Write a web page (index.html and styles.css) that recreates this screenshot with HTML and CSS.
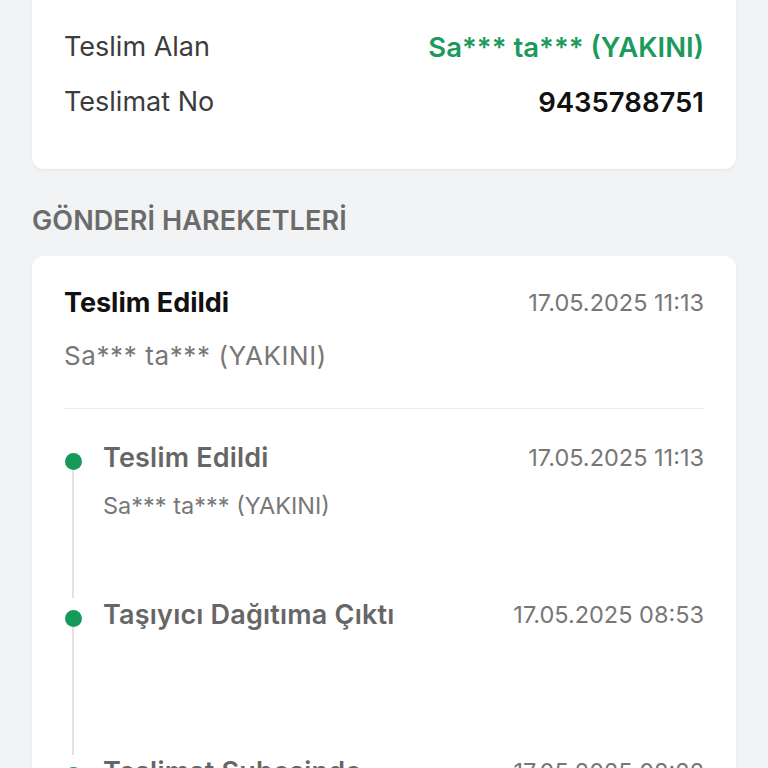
FILE: index.html
```html
<!DOCTYPE html>
<html lang="tr">

<head>
    <meta charset="UTF-8">
    <meta name="viewport" content="width=device-width, initial-scale=1.0">
    <title>Gönderi Takip</title>
    <link rel="stylesheet" href="styles.css">
</head>

<body>
    <div class="page">
        <div class="card summary">
            <div class="row">
                <span class="label">Teslim Alan</span>
                <span class="value green">Sa*** ta*** (YAKINI)</span>
            </div>
            <div class="row">
                <span class="label">Teslimat No</span>
                <span class="value">9435788751</span>
            </div>
        </div>

        <h2 class="section-title">GÖNDERİ HAREKETLERİ</h2>

        <div class="card history">
            <div class="last">
                <div class="row">
                    <span class="last-title">Teslim Edildi</span>
                    <span class="date">17.05.2025 11:13</span>
                </div>
                <p class="last-sub">Sa*** ta*** (YAKINI)</p>
            </div>

            <ul class="timeline">
                <li class="event">
                    <div class="rail"><span class="dot"></span><span class="line"></span></div>
                    <div class="event-body">
                        <div class="row">
                            <span class="event-title">Teslim Edildi</span>
                            <span class="date">17.05.2025 11:13</span>
                        </div>
                        <p class="event-sub">Sa*** ta*** (YAKINI)</p>
                    </div>
                </li>
                <li class="event">
                    <div class="rail"><span class="dot"></span><span class="line"></span></div>
                    <div class="event-body">
                        <div class="row">
                            <span class="event-title">Taşıyıcı Dağıtıma Çıktı</span>
                            <span class="date">17.05.2025 08:53</span>
                        </div>
                        <p class="event-sub"></p>
                    </div>
                </li>
                <li class="event">
                    <div class="rail"><span class="dot"></span><span class="line"></span></div>
                    <div class="event-body">
                        <div class="row">
                            <span class="event-title">Teslimat Şubesinde</span>
                            <span class="date">17.05.2025 08:22</span>
                        </div>
                        <p class="event-sub"></p>
                    </div>
                </li>
            </ul>
        </div>
    </div>
</body>

</html>
```

FILE: styles.css
```css
* {
    margin: 0;
    padding: 0;
    box-sizing: border-box;
    list-style-type: none;
}

body {
    background-color: #f2f3f5;
    font-family: Inter, "Noto Sans", sans-serif;
    overflow: hidden;
}

.page {
    padding: 0 32px;
}

.card {
    background-color: #fff;
    border-radius: 12px;
    box-shadow: 0 1px 3px rgba(0, 0, 0, .06);
}

.summary {
    margin-top: -20px;
    padding: 49px 32px 49px;
    display: flex;
    flex-direction: column;
    gap: 19px;
}

.row {
    display: flex;
    justify-content: space-between;
    align-items: center;
}

.label {
    font-size: 27px;
    line-height: 36px;
    color: #3c3c3c;
}

.value {
    font-size: 27.5px;
    line-height: 36px;
    font-weight: 600;
    color: #111;
}

.green {
    color: #1b9a5c;
}

.section-title {
    margin: 36px 0 19px;
    font-size: 27px;
    line-height: 32px;
    font-weight: 600;
    color: #6b6b6b;
    letter-spacing: 0.1px;
}

.history {
    padding: 29px 32px 0;
    height: 600px;
}

.last {
    padding-bottom: 36px;
    border-bottom: 1px solid #ececec;
}

.last-title {
    font-size: 27px;
    line-height: 36px;
    font-weight: 700;
    color: #111;
}

.date {
    font-size: 23.5px;
    line-height: 34px;
    color: #777;
}

.last-sub {
    margin-top: 19px;
    font-size: 26px;
    line-height: 32px;
    color: #777;
    letter-spacing: 0.6px;
}

.timeline {
    padding-top: 32px;
}

.event {
    display: flex;
}

.rail {
    width: 20px;
    margin-left: -1px;
    display: flex;
    flex-direction: column;
    align-items: center;
    padding-top: 12px;
}

.dot {
    width: 17px;
    height: 17px;
    border-radius: 50%;
    background-color: #159a58;
    flex-shrink: 0;
}

.line {
    width: 2px;
    flex: 1;
    background-color: #e2e2e2;
}

.event-body {
    flex: 1;
    margin-left: 20px;
    padding-bottom: 78px;
}

.event-title {
    font-size: 27px;
    line-height: 34px;
    font-weight: 600;
    color: #666;
    letter-spacing: 0.2px;
}

.event-sub {
    margin-top: 17px;
    height: 28px;
    font-size: 23.5px;
    line-height: 28px;
    color: #777;
}
```
